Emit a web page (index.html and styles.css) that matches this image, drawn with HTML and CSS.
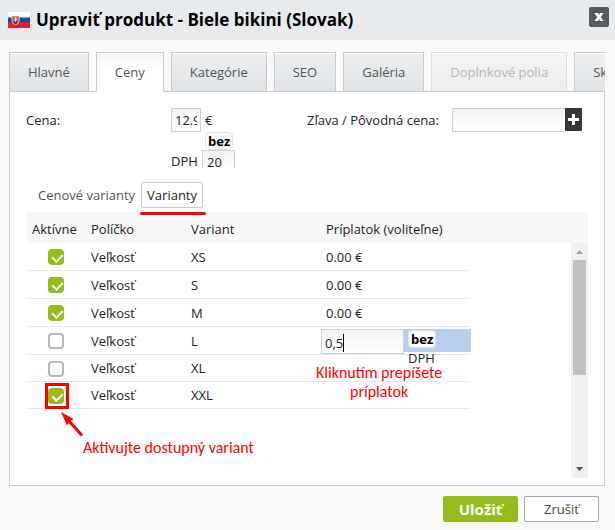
FILE: index.html
```html
<!DOCTYPE html>
<html lang="sk">
<head>
<meta charset="utf-8">
<meta name="viewport" content="width=device-width, initial-scale=1">
<title>Upraviť produkt</title>
<link rel="stylesheet" href="styles.css">
</head>
<body>
<main class="dialog">
  <header class="dialog-header">
    <svg class="flag" viewBox="0 0 22 16" aria-hidden="true">
      <rect width="22" height="16" fill="#fff"/>
      <rect y="5.5" width="22" height="5.5" fill="#0b4ea2"/>
      <rect y="10.5" width="22" height="5.5" fill="#ee1c25"/>
      <path d="M3.5 3.500h8v4.500q0 3.500-4 5-4-1.500-4-5z" fill="#fff"/>
      <path d="M4.200 4.200h6.600v4q0 2.800-3.300 4.200-3.300-1.400-3.300-4.200z" fill="#ee3a43"/>
      <path d="M5 10.500q1-1.200 2.500-1.200t2.500 1.200q-1 1.200-2.500 1.900-1.500-.7-2.500-1.900z" fill="#0b4ea2"/>
      <path d="M7.500 4.800v5M6.200 6h2.600M5.700 7.700h3.600" stroke="#fff" stroke-width=".8"/>
    </svg>
    <h1 class="title">Upraviť produkt - Biele bikini (Slovak)</h1>
    <button class="close" type="button" aria-label="Zavrieť">
      <svg viewBox="0 0 20 20"><path d="M5.500 6h3.500l1 2 1-2h3.500l-2.700 4 2.700 4H11l-1-2-1 2H5.500l2.700-4z" fill="#fff"/></svg>
    </button>
  </header>

  <nav class="tabs">
    <button class="tab" type="button">Hlavné</button>
    <button class="tab tab-active" type="button">Ceny</button>
    <button class="tab" type="button">Kategórie</button>
    <button class="tab" type="button">SEO</button>
    <button class="tab" type="button">Galéria</button>
    <button class="tab" type="button" disabled>Doplnkové polia</button>
    <button class="tab" type="button">Sklad</button>
  </nav>

  <section class="panel">
    <div class="prices">
      <label class="price-label" for="price">Cena:</label>
      <div class="price-fields">
        <input class="field price" id="price" type="text" value="12.90">
        <div class="price-unit">€ <b class="badge">bez</b></div>
        <label class="vat-label" for="vat">DPH</label>
        <input class="field vat" id="vat" type="text" value="20">
      </div>
      <label class="sale-label" for="sale">Zľava / Pôvodná cena:</label>
      <div class="sale-fields">
        <input class="field sale" id="sale" type="text">
        <button class="add" type="button" aria-label="Pridať">
          <svg viewBox="0 0 17 23"><path d="M7 6h3v4h4v3h-4v4H7v-4H3v-3h4z" fill="#fff"/></svg>
        </button>
      </div>
    </div>

    <div class="subtabs">
      <button class="subtab" type="button">Cenové varianty</button>
      <button class="subtab subtab-active" type="button">Varianty</button>
    </div>

    <table class="grid grid-head">
      <colgroup><col class="col-active"><col class="col-field"><col class="col-variant"><col></colgroup>
      <thead><tr><th>Aktívne</th><th>Políčko</th><th>Variant</th><th>Príplatok (voliteľne)</th></tr></thead>
    </table>
    <div class="scroll">
      <div class="scroll-body">
        <table class="grid grid-body">
          <colgroup><col class="col-active"><col class="col-field"><col class="col-variant"><col class="col-extra"></colgroup>
          <tbody>
            <tr><td class="tick"><input class="check" type="checkbox" aria-label="XS" checked></td><td>Veľkosť</td><td>XS</td><td>0.00 €</td></tr>
            <tr><td class="tick"><input class="check" type="checkbox" aria-label="S" checked></td><td>Veľkosť</td><td>S</td><td>0.00 €</td></tr>
            <tr><td class="tick"><input class="check" type="checkbox" aria-label="M" checked></td><td>Veľkosť</td><td>M</td><td>0.00 €</td></tr>
            <tr><td class="tick"><input class="check" type="checkbox" aria-label="L"></td><td>Veľkosť</td><td>L</td>
              <td class="edit-cell"><div class="editor"><div class="edit-box"><input class="field edit" type="text" value="0,5" aria-label="Príplatok"><span class="caret"></span></div><span class="edit-unit"><b class="badge">bez</b> DPH</span></div></td></tr>
            <tr><td class="tick"><input class="check" type="checkbox" aria-label="XL"></td><td>Veľkosť</td><td>XL</td><td></td></tr>
            <tr><td class="tick"><span class="marked"><input class="check" type="checkbox" aria-label="XXL" checked></span></td><td>Veľkosť</td><td>XXL</td><td></td></tr>
          </tbody>
        </table>
        <p class="note note-extra">Kliknutím prepíšete<br>príplatok</p>
        <svg class="arrow" viewBox="0 0 24 26" aria-hidden="true">
          <path d="M22 24.500L9 10" stroke="#f00" stroke-width="3"/>
          <path d="M1 1l12.500 7-3.500 2.500-3 4z" fill="#f00"/>
        </svg>
        <p class="note note-active">Aktivujte dostupný variant</p>
      </div>
      <div class="bar" aria-hidden="true">
        <svg class="bar-arrow" viewBox="0 0 17 17"><path d="M5 11l3.500-4 3.500 4z" fill="#a3a3a3"/></svg>
        <div class="thumb"></div>
        <svg class="bar-arrow bar-down" viewBox="0 0 17 17"><path d="M5 6l3.500 4 3.500-4z" fill="#505050"/></svg>
      </div>
    </div>
  </section>

  <footer class="actions">
    <button class="btn btn-save" type="button">Uložiť</button>
    <button class="btn btn-cancel" type="button">Zrušiť</button>
  </footer>
</main>
</body>
</html>
```

FILE: styles.css
```css
* { box-sizing: border-box; }
body {
  margin: 0;
  background: #f9f9f9;
  color: #222;
  font: 13px/18px "Open Sans", "Noto Sans", sans-serif;
}
button, input { font: inherit; color: inherit; margin: 0; padding: 0; }
svg { display: block; }

.dialog { min-height: 100vh; display: flex; flex-direction: column; }
.dialog-header {
  display: flex;
  align-items: center;
  height: 40px;
  padding: 0 6px 0 8px;
  background: #e8ebee;
}
.flag { width: 22px; height: 16px; margin-right: 6px; }
.title { flex: 1; margin: 0; font-size: 17px; line-height: 24px; font-weight: 700; color: #000; }
.close {
  width: 20px;
  height: 20px;
  margin-bottom: 6px;
  border: 0;
  border-radius: 2px;
  background: #565b60;
}

.tabs {
  display: flex;
  gap: 7px;
  margin: 12px 10px -1px 9px;
  overflow: hidden;
  position: relative;
}
.tab {
  flex: none;
  height: 40px;
  padding: 0 18px;
  border: 1px solid #c9cacb;
  background: linear-gradient(#eef0f2, #dfe3e6);
  box-shadow: inset 0 1px #fff;
  color: #555;
}
.tab-active { border-bottom-color: #fff; background: linear-gradient(#f4f4f4, #fff 50%); }
.tab:disabled { border-color: #dcdddd #dcdddd #c9cacb; background: linear-gradient(#f4f5f6, #ebedef); color: #b5b5b5; }

.panel {
  flex: 1;
  display: flex;
  flex-direction: column;
  margin: 0 10px 0 9px;
  padding: 16px 16px 7px;
  border: 1px solid #c9cacb;
  background: #fff;
}
.prices { display: flex; height: 60px; overflow: hidden; }
.price-label { flex: none; width: 145px; padding-top: 3px; }
.price-fields {
  flex: none;
  width: 136px;
  display: grid;
  grid-template-columns: 30px 34px;
  grid-template-rows: 42px 18px;
  column-gap: 4px;
}
.field {
  height: 24px;
  padding: 0 4px;
  border: 1px solid #d0d1d2;
  border-radius: 0;
  background: linear-gradient(#f3f3f3, #fff);
  outline: 0;
}
.price { width: 30px; padding: 0 3px; }
.price-unit { line-height: 24px; }
.badge {
  display: inline-block;
  padding: 0 2px;
  border: 1px solid #e2e2e2;
  border-radius: 4px;
  background: #fafafa;
  line-height: 16px;
  color: #000;
}
.price-unit .badge { display: block; width: max-content; }
.vat-label { padding-top: 2px; }
.vat { width: 33px; margin-left: -3px; }
.sale-label { flex: none; width: 145px; padding-top: 3px; }
.sale-fields { flex: 1; min-width: 0; display: flex; padding-right: 6px; }
.sale { flex: 1; min-width: 0; border-right: 0; }
.add { flex: none; width: 17px; height: 23px; border: 0; border-radius: 0 1px 1px 0; background: #34383b; }

.subtabs { display: flex; margin: 14px 0 4px 6px; }
.subtab { height: 26px; padding: 0 5px; border: 1px solid transparent; border-radius: 2px; background: none; color: #555; }
.subtab-active { position: relative; border-color: #c6cad3; background: #fff; color: #222; }
.subtab-active::after {
  content: "";
  position: absolute;
  left: -2px;
  right: -4px;
  top: 29px;
  height: 3px;
  border-radius: 2px;
  background: #f00;
}

.grid { border-collapse: separate; border-spacing: 0; table-layout: fixed; }
.grid-head { width: 100%; background: #f7f7f7; }
.col-active { width: 59px; }
.col-field { width: 100px; }
.col-variant { width: 135px; }
.col-extra { width: 150px; }
th { height: 31px; padding: 2px 6px 0; font-weight: 400; text-align: left; white-space: nowrap; }
th:first-child { padding-right: 0; }
.scroll { flex: 1; display: flex; min-height: 235px; }
.scroll-body { flex: 1; position: relative; }
.grid-body { width: 444px; }
td { height: 28px; padding: 0 6px; border-bottom: 1px solid #e9e9e9; }
tr:nth-child(n+5) td { height: 27px; }
td.tick { padding: 1px 0 0 22px; }

.check {
  appearance: none;
  display: block;
  width: 16px;
  height: 16px;
  border: 2px solid #b9b9b9;
  border-radius: 4px;
  background: #fff;
}
.check:checked { border-color: #95bc1b; background: #95bc1b; }
.check:checked::before {
  content: "";
  display: block;
  width: 5px;
  height: 8px;
  margin: 1px 0 0 4px;
  border: solid #fff;
  border-width: 0 2px 2px 0;
  transform: rotate(45deg);
}
.marked { display: block; position: relative; width: 16px; }
.marked::after { content: ""; position: absolute; inset: -5px -5px -5px -3px; border: 3px solid #f00; }

td.edit-cell { padding: 2px 0 0; vertical-align: top; }
.editor { display: flex; gap: 4px; height: 23px; margin-right: -1px; margin-left: 1px; background: #b8ceed; }
.edit-box { position: relative; height: 24px; }
.edit { display: block; width: 83px; height: 25px; padding: 3px 3px 0; }
.caret { position: absolute; left: 22px; top: 5px; width: 1px; height: 18px; background: #000; }
.edit-unit { width: 30px; padding-top: 1px; line-height: 20px; }
.edit-unit .badge { display: block; width: max-content; }

.note { position: absolute; margin: 0; color: #f00; font: 16px/19px Carlito, Lato, "Open Sans", sans-serif; white-space: nowrap; }
.note-extra { left: 290px; top: 120px; text-align: center; }
.note-active { left: 57px; top: 195px; }
.arrow { position: absolute; left: 34px; top: 168px; width: 24px; height: 26px; }

.bar { display: flex; flex-direction: column; width: 17px; background: #f0f0f0; }
.bar-arrow { width: 17px; height: 17px; }
.thumb { height: 115px; margin: 0 2px; background: #c1c1c1; }
.bar-down { margin-top: auto; }

.actions { display: flex; justify-content: flex-end; gap: 6px; padding: 10px 16px 8px; }
.btn { width: 75px; height: 26px; border: 1px solid #a0a7b5; border-radius: 2px; background: #fff; color: #444; }
.btn-save { border-color: #95bc1b; background: #95bc1b; color: #fff; font-size: 15px; font-weight: 700; }
```
